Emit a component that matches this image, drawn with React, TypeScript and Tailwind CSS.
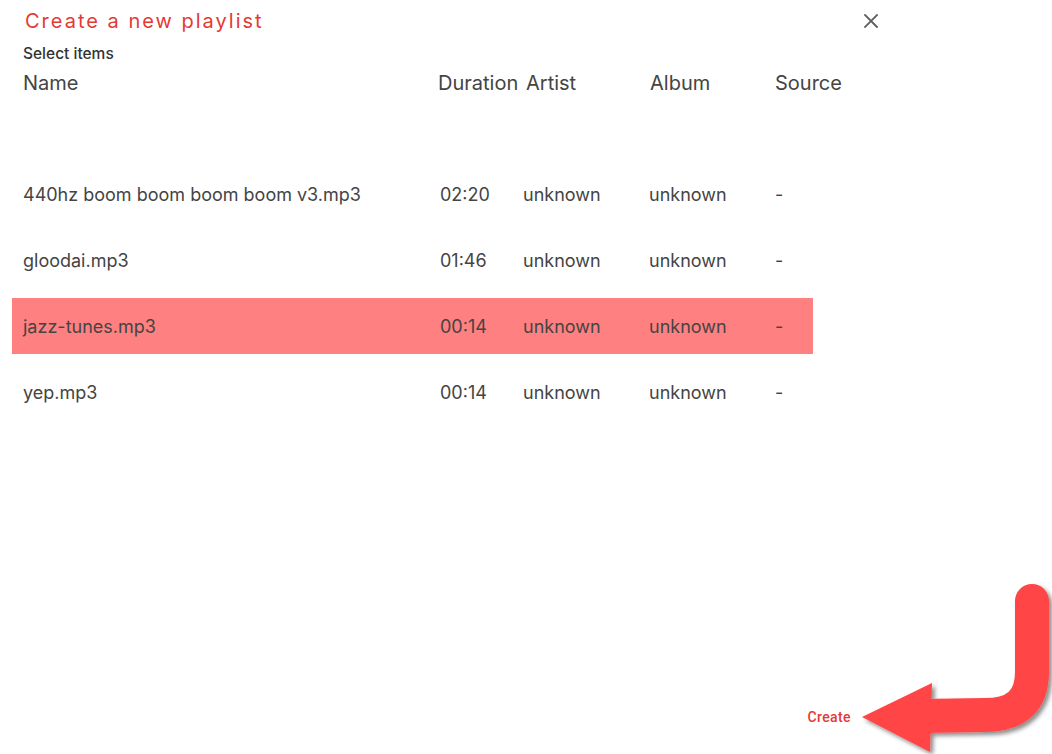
import React from "react";

const rows = [
  { name: "440hz boom boom boom boom v3.mp3", dur: "02:20", selected: false },
  { name: "gloodai.mp3", dur: "01:46", selected: false },
  { name: "jazz-tunes.mp3", dur: "00:14", selected: true },
  { name: "yep.mp3", dur: "00:14", selected: false },
];

export default function App() {
  return (
    <div
      className="relative w-[1052px] h-[754px] bg-white overflow-hidden flex flex-col"
      style={{ fontFamily: "Inter, 'Noto Sans', sans-serif" }}
    >
      <div className="flex items-start w-[890px]">
        <div className="flex-1 pl-[25px] pt-[7px]">
          <div className="text-[20px] leading-[28px] tracking-[2px] text-[#e53935]">
            Create a new playlist
          </div>
        </div>
        <button className="mt-[11px] mr-[9px] w-[20px] h-[20px] flex items-center justify-center text-[#555]">
          <svg width="14" height="14" viewBox="0 0 14 14">
            <path d="M1 1 L13 13 M13 1 L1 13" stroke="#5f5f5f" strokeWidth="1.8" strokeLinecap="square" />
          </svg>
        </button>
      </div>
      <div className="pl-[23px] mt-[9px] text-[15.5px] leading-[20px] font-medium text-[#333]">
        Select items
      </div>
      <div className="mt-[5px] pl-[23px] w-[813px] grid grid-cols-[415px_88px_124px_125px_1fr] text-[20px] leading-[28px] text-[#444]">
        <div>Name</div>
        <div>Duration</div>
        <div>Artist</div>
        <div>Album</div>
        <div>Source</div>
      </div>
      <div className="mt-[69px] ml-[12px] w-[801px] flex flex-col gap-[10px]">
        {rows.map((r) => (
          <div
            key={r.name}
            className={`h-[56px] pl-[11px] grid grid-cols-[417px_83px_126px_126px_1fr] items-center text-[18px] text-[#444] ${
              r.selected ? "bg-[#ff8080]" : ""
            }`}
          >
            <div>{r.name}</div>
            <div>{r.dur}</div>
            <div>unknown</div>
            <div>unknown</div>
            <div>-</div>
          </div>
        ))}
      </div>
      <div className="flex-1" />
      <div className="w-[858px] flex justify-end pb-[19px]">
        <button
          className="pl-[8px] pr-[7px] py-[6px] text-[14px] leading-[24px] tracking-[0.4px] font-medium text-[#e53935]"
          style={{ fontFamily: "Roboto, sans-serif" }}
        >
          Create
        </button>
      </div>
      <svg
        className="absolute left-0 top-0 pointer-events-none"
        width="1052"
        height="754"
        viewBox="0 0 1052 754"
      >
        <defs>
          <filter id="sh" x="-20%" y="-20%" width="140%" height="140%">
            <feDropShadow dx="3" dy="3" stdDeviation="2" floodColor="#000" floodOpacity="0.45" />
          </filter>
        </defs>
        <g filter="url(#sh)" fill="#ff4444">
          <path
            d="M1032 601 L1032 672 Q1032 715 985 715 L920 716"
            fill="none"
            stroke="#ff4444"
            strokeWidth="34"
            strokeLinecap="round"
          />
          <path d="M862 717 L932 683 L930 752 Z" />
        </g>
      </svg>
    </div>
  );
}
